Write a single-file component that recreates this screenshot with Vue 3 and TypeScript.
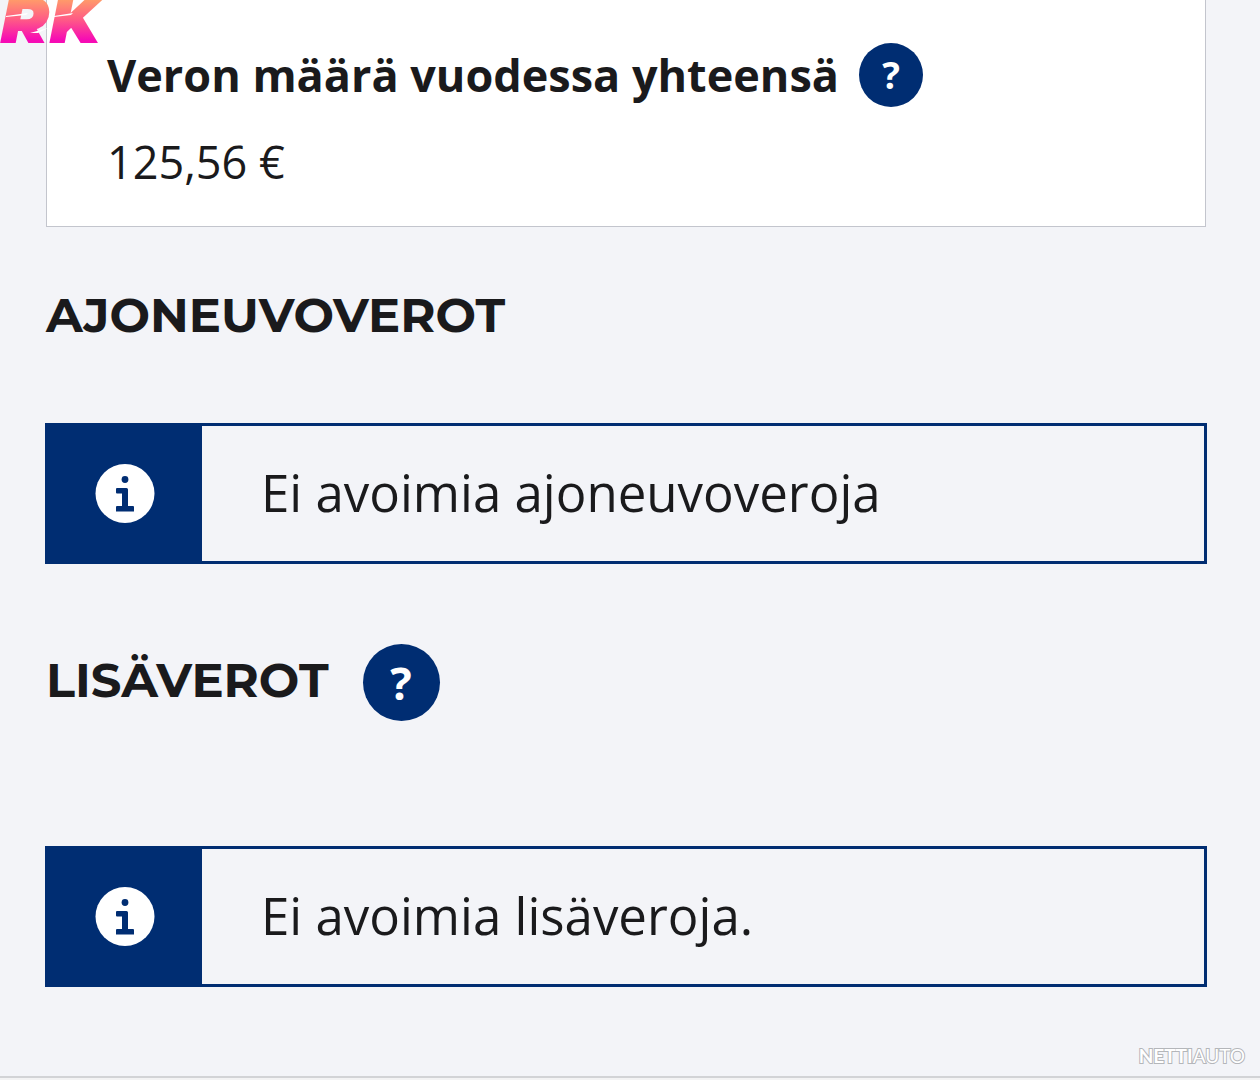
<script setup lang="ts">
interface TaxSection {
  id: string
  title: string
  help: boolean
  message: string
}

const sections: TaxSection[] = [
  { id: 'vehicle', title: 'AJONEUVOVEROT', help: false, message: 'Ei avoimia ajoneuvoveroja' },
  { id: 'additional', title: 'LISÄVEROT', help: true, message: 'Ei avoimia lisäveroja.' },
]
</script>

<template>
  <div class="page">
    <div class="dealer">
      <span class="dealer-name">RK</span>
      <svg class="dealer-cuts" viewBox="0 0 112 44" width="112" height="44" aria-hidden="true">
        <path d="M6 16L28 13L26 15L6 17z M30 33L48 28L38 33z M54 16L73 13L71 15L54 17z" fill="#fff" />
      </svg>
    </div>
    <main class="content">
      <section class="card">
        <div class="card-head">
          <h3 class="card-title">Veron määrä vuodessa yhteensä</h3>
          <button class="help" type="button">?</button>
        </div>
        <p class="amount">125,56 €</p>
      </section>

      <section v-for="s in sections" :key="s.id" class="tax">
        <div class="tax-head" :class="{ tall: s.help }">
          <h2 class="tax-title">{{ s.title }}</h2>
          <button v-if="s.help" class="help large" type="button">?</button>
        </div>
        <div class="notice">
          <div class="notice-icon">
            <svg viewBox="0 0 60 60" width="60" height="60" aria-hidden="true">
              <circle cx="30" cy="29.500" r="29.5" fill="#fff" />
              <circle cx="30" cy="15.500" r="3.4" fill="#002d72" />
              <path d="M22 24h9.500q1.500 0 1.500 1.500V42h5q1 0 1 1v4.500H21V43q0-1 1-1h5V29.500h-5q-1 0-1-1V25q0-1 1-1z" fill="#002d72" />
            </svg>
          </div>
          <p class="notice-text">{{ s.message }}</p>
        </div>
      </section>
    </main>
    <footer class="foot"></footer>
    <span class="watermark"><b>NETTI</b>AUTO</span>
  </div>
</template>

<style>
body {
  margin: 0;
  background: #f3f4f8;
}
</style>

<style scoped>
.page {
  position: relative;
  color: #1a1a1c;
  background: #f3f4f8;
  font-family: "Open Sans", "Noto Sans", sans-serif;
}
.dealer {
  position: absolute;
  top: 0;
  left: 0;
}
.dealer-name {
  display: block;
  padding: 0 20px 4px 0;
  font: italic 900 66px/40px Montserrat, Inter, sans-serif;
  color: transparent;
  background: linear-gradient(#ff9a6a, #ff5a86 45%, #f60cb4 90%);
  background-clip: text;
}
.dealer-cuts {
  position: absolute;
  top: 0;
  left: 0;
}
.content {
  padding: 0 54px 89px 46px;
}
.card {
  padding: 43px 60px 32px;
  background: #fff;
  border: 1px solid #c3c5cd;
  border-top: 0;
}
.card-head {
  display: flex;
  align-items: center;
  gap: 20px;
}
.card-title {
  margin: 0;
  font-size: 45px;
  font-weight: 700;
  line-height: 64px;
}
.help {
  flex: none;
  width: 64px;
  height: 64px;
  padding: 0;
  border: 0;
  border-radius: 50%;
  color: #fff;
  background: #002d72;
  font: 700 37px/64px "Open Sans", sans-serif;
}
.help.large {
  width: 77px;
  height: 77px;
  font-size: 45px;
  line-height: 77px;
}
.amount {
  margin: 23px 0 0;
  font-size: 45px;
  line-height: 64px;
}
.tax-head {
  display: flex;
  align-items: flex-start;
  gap: 34px;
  padding: 52px 0 72px;
}
.tax-head.tall {
  padding: 80px 0 125px;
}
.tax-title {
  margin: 0;
  font: 700 48px/72px Montserrat, Inter, sans-serif;
}
.notice {
  display: flex;
  margin: 0 -1px;
  border: 3px solid #002d72;
}
.notice-icon {
  display: flex;
  flex: none;
  align-items: center;
  justify-content: center;
  width: 154px;
  background: #002d72;
}
.notice-text {
  margin: 0;
  padding: 34px 59px 37px;
  font-size: 51px;
  line-height: 64px;
}
.foot {
  height: 3px;
  border-top: 2px solid #d2d3d6;
  border-bottom: 1px solid #f3f3f4;
  background: #f3f3f4;
}
.watermark {
  position: absolute;
  right: 15px;
  bottom: 14px;
  color: #fff;
  font: 400 19px/24px Lato, sans-serif;
  -webkit-text-stroke: 2px #b4b6ba;
  paint-order: stroke fill;
}
</style>
